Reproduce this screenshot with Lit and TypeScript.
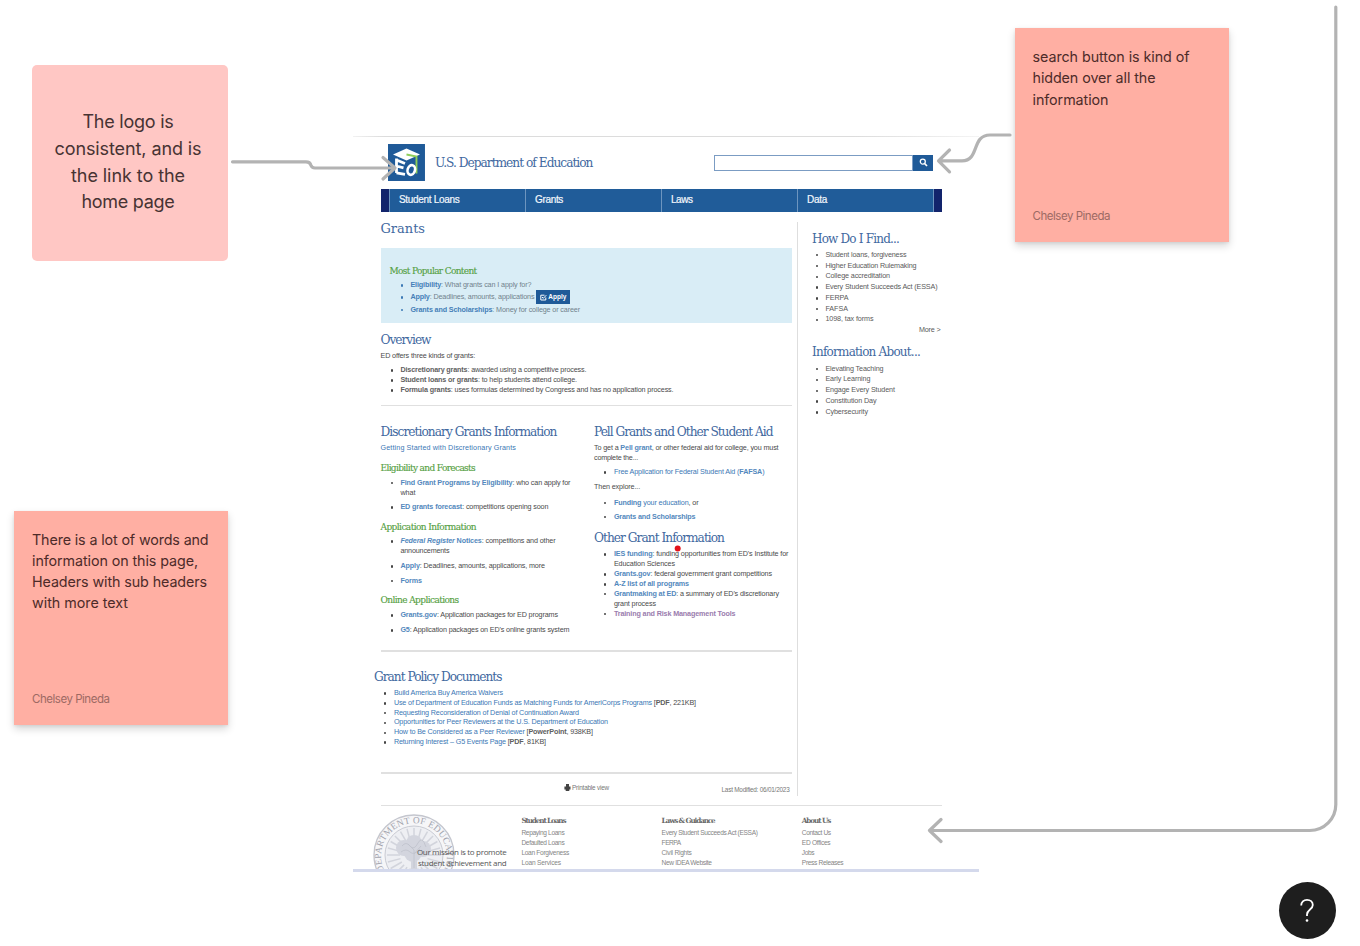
import { LitElement, html, css, svg, TemplateResult } from "lit";
import { customElement, property } from "lit/decorators.js";
import { styleMap } from "lit/directives/style-map.js";

/** One line of text tracked so that it fills the given width. */
@customElement("fit-line")
class FitLine extends LitElement {
  @property({ type: Number }) w = 0;

  static styles = css`
    :host { display: inline-block; white-space: nowrap; }
    .t { display: inline-block; }
  `;

  updated() {
    const box = this.renderRoot.querySelector(".t") as HTMLElement;
    this.style.letterSpacing = "0px";
    const n = (this.textContent || "").trim().length;
    if (!this.w || n < 2) return;
    const gap = (this.w - box.getBoundingClientRect().width) / n;
    this.style.letterSpacing = gap.toFixed(3) + "px";
  }

  render() {
    return html`<span class="t"><slot></slot></span>`;
  }
}

type Kind = "h" | "sub" | "p" | "li" | "cont";
type Row = [Kind, number, number, TemplateResult | string];

const row = ([kind, gap, w, text]: Row) => html`
  <div class="row ${kind}" style=${styleMap({ marginTop: gap + "px" })}><fit-line .w=${w}>${text}</fit-line></div>`;

const discretionary: Row[] = [
  ["h", 18, 176, "Discretionary Grants Information"],
  ["p", 3, 135.5, html`<a>Getting Started with Discretionary Grants</a>`],
  ["sub", 9, 94.5, "Eligibility and Forecasts"],
  ["li", 3.5, 170, html`<a><b>Find Grant Programs by Eligibility</b></a>: who can apply for`],
  ["cont", 0, 15, "what"],
  ["li", 4.5, 148, html`<a><b>ED grants forecast</b></a>: competitions opening soon`],
  ["sub", 9, 95.5, "Application Information"],
  ["li", 3, 155, html`<a><b><i>Federal Register</i> Notices</b></a>: competitions and other`],
  ["cont", 0, 49, "announcements"],
  ["li", 5, 144.5, html`<a><b>Apply</b></a>: Deadlines, amounts, applications, more`],
  ["li", 4.5, 21.5, html`<a><b>Forms</b></a>`],
  ["sub", 8.5, 78, "Online Applications"],
  ["li", 4, 157.5, html`<a><b>Grants.gov</b></a>: Application packages for ED programs`],
  ["li", 5, 169, html`<a><b>G5</b></a>: Application packages on ED's online grants system`],
];

const pell: Row[] = [
  ["h", 18, 178.5, "Pell Grants and Other Student Aid"],
  ["p", 3, 184.5, html`To get a <a><b>Pell grant</b></a>, or other federal aid for college, you must`],
  ["p", -0.5, 44, "complete the..."],
  ["li", 4.5, 150.5, html`<a>Free Application for Federal Student Aid (<b>FAFSA</b>)</a>`],
  ["p", 5, 46, "Then explore..."],
  ["li", 5.5, 84.5, html`<a><b>Funding</b> your education</a>, or`],
  ["li", 4, 81.5, html`<a><b>Grants and Scholarships</b></a>`],
  ["h", 8.5, 130, "Other Grant Information"],
  ["li", 3, 174.5, html`<a><b>IES funding</b></a>: funding opportunities from ED's Institute for`],
  ["cont", 0, 61, "Education Sciences"],
  ["li", 0, 158, html`<a><b>Grants.gov</b></a>: federal government grant competitions`],
  ["li", 0, 75, html`<a><b>A-Z list of all programs</b></a>`],
  ["li", -0.5, 165, html`<a><b>Grantmaking at ED</b></a>: a summary of ED's discretionary`],
  ["cont", 0, 42, "grant process"],
  ["li", 0, 121.5, html`<a class="seen"><b>Training and Risk Management Tools</b></a>`],
];

const policy: Row[] = [
  ["h", 17.5, 127.5, "Grant Policy Documents"],
  ["li", 3, 109, html`<a>Build America Buy America Waivers</a>`],
  ["li", -0.2, 302, html`<a>Use of Department of Education Funds as Matching Funds for AmeriCorps Programs</a> [<b>PDF</b>, 221KB]`],
  ["li", -0.2, 185, html`<a>Requesting Reconsideration of Denial of Continuation Award</a>`],
  ["li", -0.2, 214, html`<a>Opportunities for Peer Reviewers at the U.S. Department of Education</a>`],
  ["li", -0.2, 199, html`<a>How to Be Considered as a Peer Reviewer</a> [<b>PowerPoint</b>, 938KB]`],
  ["li", -0.2, 152, html`<a>Returning Interest – G5 Events Page</a> [<b>PDF</b>, 81KB]`],
];

const overview: Row[] = [
  ["h", 9, 50, "Overview"],
  ["p", 2.5, 94.5, "ED offers three kinds of grants:"],
  ["li", 4.5, 186, html`<b>Discretionary grants</b>: awarded using a competitive process.`],
  ["li", 0, 176.5, html`<b>Student loans or grants</b>: to help students attend college.`],
  ["li", 0, 273, html`<b>Formula grants</b>: uses formulas determined by Congress and has no application process.`],
];

const find: Row[] = [
  ["h", 8.5, 87, "How Do I Find..."],
  ["li", 3.3, 81, "Student loans, forgiveness"],
  ["li", 0.8, 91, "Higher Education Rulemaking"],
  ["li", 0.8, 64.5, "College accreditation"],
  ["li", 0.8, 112, "Every Student Succeeds Act (ESSA)"],
  ["li", 0.8, 23, "FERPA"],
  ["li", 0.8, 22.5, "FAFSA"],
  ["li", 0.6, 48, "1098, tax forms"],
];

const about: Row[] = [
  ["h", 9, 108, "Information About..."],
  ["li", 3.3, 58, "Elevating Teaching"],
  ["li", 0.8, 45, "Early Learning"],
  ["li", 0.8, 69.5, "Engage Every Student"],
  ["li", 0.8, 51, "Constitution Day"],
  ["li", 0.9, 42.5, "Cybersecurity"],
];

const footer: { title: [string, number]; links: [string, number][] }[] = [
  { title: ["Student Loans", 44], links: [["Repaying Loans", 43], ["Defaulted Loans", 43], ["Loan Forgiveness", 47.5], ["Loan Services", 39.5]] },
  { title: ["Laws & Guidance", 53], links: [["Every Student Succeeds Act (ESSA)", 96], ["FERPA", 19], ["Civil Rights", 30], ["New IDEA Website", 50]] },
  { title: ["About Us", 28.5], links: [["Contact Us", 29], ["ED Offices", 28.5], ["Jobs", 12.5], ["Press Releases", 41.5]] },
];

@customElement("app-root")
class AppRoot extends LitElement {
  static styles = css`
    :host { display: block; position: relative; width: 1360px; height: 946px; overflow: hidden; background: #fff; font-family: Inter, sans-serif; }
    * { box-sizing: border-box; }

    .site { position: absolute; left: 353px; top: 135.5px; width: 626px; height: 736px; overflow: hidden; display: flex; flex-direction: column; font: 7.2px/10px "Liberation Sans", Arial, sans-serif; color: #4a4a4a; }
    .site::before { content: ""; flex: none; height: 1.5px; background: linear-gradient(90deg, #f1f1f1, #dcdcdc 5%, #dcdcdc 80%, #f4f4f4); }
    .masthead { flex: none; height: 51.5px; padding: 0 46px 0 35px; display: flex; align-items: center; }
    .logo { width: 37px; height: 37px; margin-right: 10px; }
    .brand { font: 12.2px/16px "DejaVu Serif", serif; color: #42699f; width: 279.5px; }
    .search { display: flex; width: 219px; height: 16.5px; }
    .field { flex: 1; border: 1.3px solid #7b9cc3; }
    .go { width: 20px; background: #1f5a98; display: grid; place-items: center; }
    .nav { flex: none; margin-left: 27.5px; width: 561px; height: 23px; display: flex; background: #205c99; border-left: 8.5px solid #12246c; border-right: 8.5px solid #12246c; }
    .tab { flex: 1; border-left: 1px solid #6d95bf; padding-left: 9.5px; font: 10px/21.5px "Liberation Sans", Arial, sans-serif; color: #f2f7fc; -webkit-text-stroke: .2px #f2f7fc; }
    .tab:last-child { border-right: 1px solid #6d95bf; }

    .body { flex: none; height: 584px; padding: 9.5px 0 0 27.5px; display: flex; }
    .main { width: 411.5px; display: flex; flex-direction: column; }
    .side { margin-left: 4.5px; padding-left: 14.5px; border-left: 1.5px solid #dedede; width: 145px; height: 574px; margin-top: 1px; }

    .row { flex: none; height: 10px; display: flex; align-items: center; white-space: nowrap; }
    .h { height: 16px; font: 12.2px/16px "DejaVu Serif", serif; color: #42699f; }
    .side .h { font-size: 12px; }
    .h.title { font-size: 13px; }
    .sub { height: 12px; font: 9px/12px "DejaVu Serif", serif; color: #55a043; -webkit-text-stroke: .15px #55a043; }
    .li::before { content: ""; flex: none; width: 2.4px; height: 2.4px; border-radius: 50%; background: #444; margin: 1px 7.5px 0 10px; }
    .cont { padding-left: 19.9px; }
    .side .li::before { margin: 1px 7px 0 4px; }
    .side .li { color: #5a5a5a; }
    a { color: #3b78b5; }
    a.seen { color: #8d6ba3; }
    b { font-weight: 700; opacity: .88; }

    .popular { flex: none; margin-top: 10.5px; height: 75.5px; padding: 17px 9px 0; background: #d9edf6; color: #71828c; }
    .popular .li::before { background: #3b78b5; margin-left: 11px; }
    .popular a { color: #2f70b0; }
    .apply { align-self: center; flex: none; margin-left: 2px; width: 33.5px; height: 14.5px; background: #1f5a98; color: #fff; display: flex; align-items: center; justify-content: center; gap: 1.5px; font-size: 6.5px; font-weight: 700; }
    .more { text-align: right; margin-top: 1px; padding-right: 1px; color: #5a5a5a; }

    .rule { flex: none; height: 1.5px; background: #e0e0e0; }
    .cols { height: 244px; display: flex; }
    .cols > .left { width: 213.5px; }
    .policy { margin-left: -6.5px; height: 120.5px; }
    .meta { display: flex; align-items: flex-start; padding: 9px 2.5px 0 183.5px; color: #777; font-size: 6.4px; }
    .meta .print { display: flex; gap: 1px; align-items: center; flex: 1; }
    .meta .date { padding-top: 2.5px; }

    .foot { flex: none; margin: 9px 0 0 21px; width: 568px; height: 64px; display: flex; position: relative; font-size: 6.6px; color: #858585; }
    .foot::before { content: ""; position: absolute; left: 6.5px; right: 0; top: 0; height: 1.5px; background: #e0e0e0; }
    .seal { position: absolute; left: -1px; top: 9px; width: 82px; height: 82px; }
    .mission { position: relative; width: 151px; padding: 41px 15px 0 0; text-align: right; font: 8px/11px "Open Sans", sans-serif; color: #555; }
    .fcol { width: 144px; padding-top: 11.5px; }
    .fcol strong { display: block; height: 12px; font: 700 7.2px/10px "DejaVu Serif", serif; color: #686868; }
    .link { height: 10.1px; line-height: 10px; }
    .edge { position: absolute; left: 0; right: 0; bottom: 0; height: 3px; background: #d4d9ec; }

    .note { position: absolute; width: 214px; height: 214px; padding: 18px; display: flex; flex-direction: column; justify-content: space-between; background: #ffafa3; box-shadow: 0 4px 8px rgba(0,0,0,.16), 0 1px 3px rgba(0,0,0,.07); font-size: 14.3px; line-height: 21.25px; color: #4d2b29; }
    .note.a { left: 1014.5px; top: 28px; }
    .note.b { left: 14px; top: 510.5px; }
    .author { font-size: 11.5px; line-height: 15px; color: #9d6a63; }
    .shape { position: absolute; left: 32px; top: 64.5px; width: 196px; height: 196px; border-radius: 5px; background: #ffc7c4; display: flex; flex-direction: column; align-items: center; justify-content: center; font-size: 18px; line-height: 26.8px; color: #473333; padding-right: 4px; }
    .wires { position: absolute; inset: 0; }
    .help { position: absolute; left: 1278.5px; top: 882px; width: 57px; height: 57px; border-radius: 50%; background: #1e1e1e; display: grid; place-items: center; }
  `;

  private logo() {
    return svg`<svg class="logo" viewBox="0 0 37 37">
      <rect width="37" height="37" fill="#1f5a98"/>
      <path d="M5 10.5 18.5 4.5 32 10.5 18.5 16.5z" fill="#fff"/>
      <path d="M18.5 10.5 28.5 12.5V29.5" fill="none" stroke="#8fce5a" stroke-width="1.9"/>
      <path d="M8.5 14.5V29M8.5 16l8.5 3.5M8.5 22l7 1.8M8.5 29l8.5 1.5" fill="none" stroke="#fff" stroke-width="2.8"/>
      <ellipse cx="23.3" cy="26" rx="3.7" ry="4.9" fill="none" stroke="#fff" stroke-width="2.6" transform="rotate(15 23.3 26)"/>
    </svg>`;
  }

  private seal() {
    const rays = Array.from({ length: 24 }, (_, i) => i * 15);
    return svg`<svg class="seal" viewBox="0 0 82 82">
      <circle cx="41" cy="41" r="40" fill="#f6f6f8" stroke="#c4c6ce" stroke-width="1.3"/>
      <circle cx="41" cy="41" r="29" fill="#eeeff3" stroke="#c9cbd3" stroke-width="1"/>
      ${rays.map((a) => svg`<path d="M41 14V27" stroke="#d2d4dc" stroke-width="1.5" transform=${`rotate(${a} 41 41)`}/>`)}
      <g fill="#d3d5de"><circle cx="41" cy="29" r="8"/><circle cx="31" cy="34" r="8"/><circle cx="50" cy="35" r="8"/><circle cx="40" cy="39" r="9"/><path d="M38 36h6v22h-6z"/></g>
      <g fill="none" stroke="#bfc1cb" stroke-width=".8"><path d="M29 32q4-5 8 0t8-3 8 4M28 38q5-4 9 0t10-3M41 54V36l-6-6M41 40l7-8"/></g>
      <path id="ring" d="M11.5 57A33 33 0 1 1 70.5 57" fill="none"/>
      <text font-family="Liberation Serif" font-size="9.3" fill="#a2a4ae" textLength="136" lengthAdjust="spacing"><textPath href="#ring">DEPARTMENT OF EDUCATION</textPath></text>
    </svg>`;
  }

  private wires() {
    return svg`<svg class="wires" width="1360" height="946" fill="none" stroke="#b3b3b3" stroke-width="3.2" stroke-linecap="round" stroke-linejoin="round">
      <path d="M232.500 161.800H306Q310 161.800 310.800 165Q311.800 168 315 168H392"/>
      <path d="M383 157.500 395 168 383 179"/>
      <path d="M1010 135H990C971 135 980 160.800 962 160.800H940M949.500 150 938.500 160.800 949.500 171.800"/>
      <path d="M1335.800 7V804.500A26 26 0 0 1 1309.800 830.500H930M941 819.500 929.500 830.500 941 841.500"/>
      <circle cx="677.700" cy="548.600" r="3" fill="#e3131b" stroke="none"/>
    </svg>`;
  }

  render() {
    return html`
      <section class="site">
        <header class="masthead">
          ${this.logo()}
          <div class="brand"><fit-line .w=${157.5}>U.S. Department of Education</fit-line></div>
          <div class="search">
            <div class="field"></div>
            <div class="go"><svg width="9" height="9" viewBox="0 0 9 9" fill="none" stroke="#fff"><circle cx="3.800" cy="3.600" r="2.500" stroke-width="1.300"/><path d="M5.600 5.500 8 8" stroke-width="1.700"/></svg></div>
          </div>
        </header>
        <nav class="nav">
          <div class="tab"><fit-line .w=${60.5}>Student Loans</fit-line></div>
          <div class="tab"><fit-line .w=${28}>Grants</fit-line></div>
          <div class="tab"><fit-line .w=${21.5}>Laws</fit-line></div>
          <div class="tab"><fit-line .w=${20}>Data</fit-line></div>
        </nav>
        <div class="body">
          <main class="main">
            <div class="row h title"><fit-line .w=${44.5}>Grants</fit-line></div>
            <div class="popular">
              ${row(["sub", 0, 87, "Most Popular Content"])}
              ${row(["li", 3.5, 121, html`<a><b>Eligibility</b></a>: What grants can I apply for?`])}
              <div class="row li" style=${styleMap({ marginTop: "2px" })}>
                <fit-line .w=${124}><a><b>Apply</b></a>: Deadlines, amounts, applications</fit-line>
                <span class="apply"><svg width="7" height="7" viewBox="0 0 7 7" fill="none" stroke="#fff"><path d="M5.800 3.500V6H.8V1.200H4.500M2 3 3.300 4.300 6.300 1.200"/></svg>Apply</span>
              </div>
              ${row(["li", 2.5, 169.5, html`<a><b>Grants and Scholarships</b></a>: Money for college or career`])}
            </div>
            ${overview.map(row)}
            <div class="rule" style=${styleMap({ marginTop: "9.5px" })}></div>
            <div class="cols">
              <div class="left">${discretionary.map(row)}</div>
              <div>${pell.map(row)}</div>
            </div>
            <div class="rule"></div>
            <div class="policy">${policy.map(row)}</div>
            <div class="rule"></div>
            <div class="meta">
              <span class="print"><svg width="7" height="7" viewBox="0 0 7 7" fill="#444"><path d="M2 0h3v2.500h1.500V5.500H5.300V7H1.700V5.500H.4V2.500H2z"/></svg><fit-line .w=${37}>Printable view</fit-line></span>
              <span class="date"><fit-line .w=${68}>Last Modified: 06/01/2023</fit-line></span>
            </div>
          </main>
          <aside class="side">
            ${find.map(row)}
            <div class="more"><fit-line .w=${21.5}>More &gt;</fit-line></div>
            ${about.map(row)}
          </aside>
        </div>
        <footer class="foot">
          ${this.seal()}
          <div class="mission"><fit-line .w=${89.5}>Our mission is to promote</fit-line><fit-line .w=${88.5}>student achievement and</fit-line></div>
          ${footer.map((c) => html`<div class="fcol">
            <strong><fit-line .w=${c.title[1]}>${c.title[0]}</fit-line></strong>
            ${c.links.map(([t, w]) => html`<div class="link"><fit-line .w=${w}>${t}</fit-line></div>`)}
          </div>`)}
        </footer>
        <div class="edge"></div>
      </section>

      <div class="shape">
        <fit-line .w=${91}>The logo is</fit-line>
        <fit-line .w=${147}>consistent, and is</fit-line>
        <fit-line .w=${114}>the link to the</fit-line>
        <fit-line .w=${93}>home page</fit-line>
      </div>
      <div class="note a">
        <div><fit-line .w=${157}>search button is kind of</fit-line><br><fit-line .w=${123}>hidden over all the</fit-line><br><fit-line .w=${76}>information</fit-line></div>
        <div class="author"><fit-line .w=${77.5}>Chelsey Pineda</fit-line></div>
      </div>
      <div class="note b">
        <div><fit-line .w=${176.5}>There is a lot of words and</fit-line><br><fit-line .w=${166}>information on this page,</fit-line><br><fit-line .w=${175}>Headers with sub headers</fit-line><br><fit-line .w=${96}>with more text</fit-line></div>
        <div class="author"><fit-line .w=${77.5}>Chelsey Pineda</fit-line></div>
      </div>
      ${this.wires()}
      <div class="help"><svg width="16" height="26" viewBox="0 0 16 26" fill="none" stroke="#fff" stroke-width="1.800"><path d="M2.200 7.500C2.200 4 4.700 1.800 8 1.800S13.800 4 13.800 7C13.800 11.500 8 11.500 8 16.500V18"/><circle cx="8" cy="22.500" r="1.300" fill="#fff" stroke="none"/></svg></div>
    `;
  }
}
